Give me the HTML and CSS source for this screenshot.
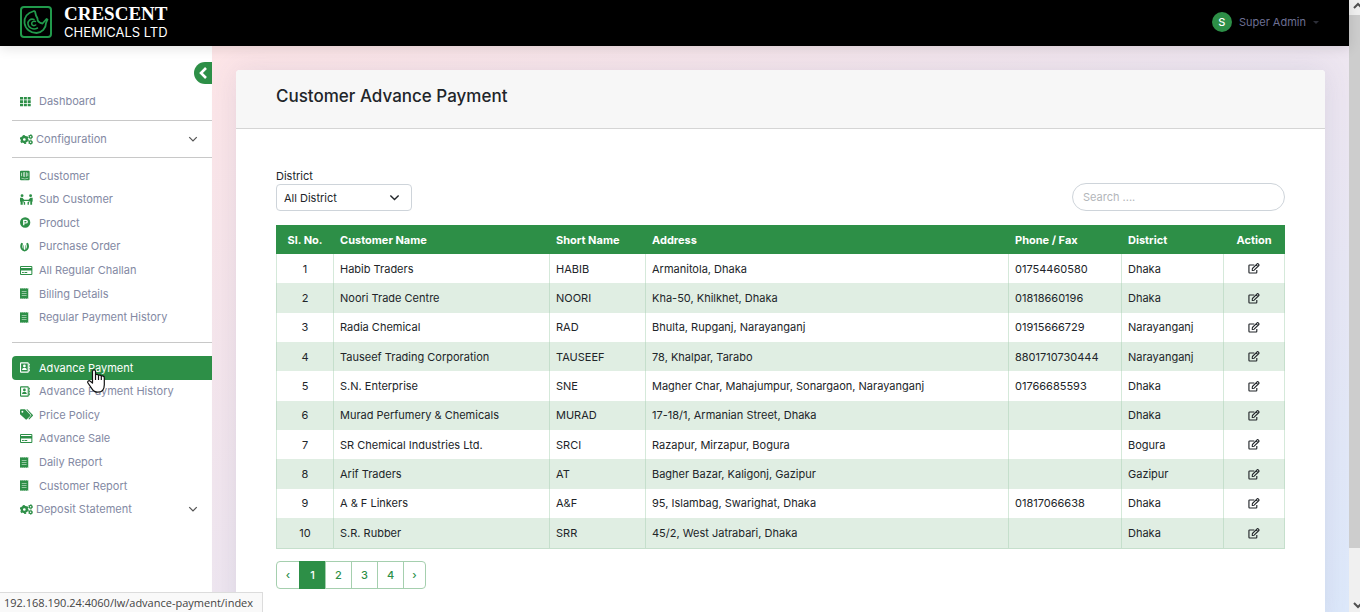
FILE: index.html
```html
<!DOCTYPE html>
<html lang="en">
<head>
<meta charset="utf-8">
<title>Customer Advance Payment</title>
<link rel="stylesheet" href="styles.css">
</head>
<body>
<svg class="sprite" aria-hidden="true">
  <symbol id="i-grid" viewBox="0 0 16 16" preserveAspectRatio="xMinYMid"><path d="M0 1.500h4.400v3.700H0zM5.600 1.500h4.400v3.700H5.600zM11.200 1.500h4.400v3.700h-4.400zM0 6.300h4.400V10H0zM5.600 6.300h4.400V10H5.600zM11.200 6.300h4.400V10h-4.400zM0 11.100h4.400v3.700H0zM5.600 11.100h4.400v3.700H5.600zM11.200 11.100h4.400v3.700h-4.400z"/></symbol>
  <symbol id="i-gears" viewBox="0 0 19 16" preserveAspectRatio="xMinYMid"><circle cx="6.300" cy="8" r="3.700" fill="none" stroke="currentColor" stroke-width="3.400"/><circle cx="6.300" cy="8" r="5.600" fill="none" stroke="currentColor" stroke-width="2" stroke-dasharray="2.900 2.960"/><circle cx="15.500" cy="4" r="2" fill="none" stroke="currentColor" stroke-width="1.800"/><circle cx="15.500" cy="4" r="3.200" fill="none" stroke="currentColor" stroke-width="1" stroke-dasharray="1.700 1.650"/><circle cx="15.500" cy="12" r="2" fill="none" stroke="currentColor" stroke-width="1.800"/><circle cx="15.500" cy="12" r="3.200" fill="none" stroke="currentColor" stroke-width="1" stroke-dasharray="1.700 1.650"/></symbol>
  <symbol id="i-intercom" viewBox="0 0 16 16" preserveAspectRatio="xMinYMid"><path fill-rule="evenodd" d="M1.500 1h11A1.500 1.500 0 0 1 14 2.500v11a1.500 1.500 0 0 1-1.500 1.500h-11A1.500 1.500 0 0 1 0 13.500v-11A1.500 1.500 0 0 1 1.500 1zM2 4v5h.9V4zm2.300-.8v6.500h.9V3.200zM6.500 3v7h.9V3zm2.200.2v6.500h.9V3.200zM11 4v5h.9V4zM2 11.200c3 2 7 2 10 0v.9c-3 2-7 2-10 0z"/></symbol>
  <symbol id="i-people" viewBox="0 0 19 16" preserveAspectRatio="xMinYMid"><circle cx="3" cy="2.400" r="2.100"/><circle cx="15.500" cy="2.400" r="2.100"/><path d="M0 5.500h3.500l2.500 2.700h6.500l2.500-2.700h3.500v5l-.8 1v4H15v-5l-1.500-.2h-8L4 10.500v5H.8v-4L0 10.500z"/><path d="M4 10l3.500 2v3.500h-2V13zM14.500 10L11 12v3.500h2V13z"/></symbol>
  <symbol id="i-product" viewBox="0 0 16 16" preserveAspectRatio="xMinYMid"><path fill-rule="evenodd" d="M7.500.5a7.500 7.500 0 1 1 0 15 7.500 7.500 0 0 1 0-15zM4.500 4v8h1.900V9.600h2.300a2.800 2.800 0 0 0 0-5.600zM6.400 5.700h2.100a1.100 1.100 0 0 1 0 2.200H6.400z"/></symbol>
  <symbol id="i-order" viewBox="0 0 16 16" preserveAspectRatio="xMinYMid"><path d="M1.900 2.500C-1 7-.2 13.500 6.700 15.300 13.600 13.500 14.400 7 11.500 2.500L9 3.500C10.500 7 10 10.500 8.600 12L8.300 6H7.600v6.700H5.800V6h-.7L4.800 12C3.400 10.500 2.900 7 4.400 3.500z"/></symbol>
  <symbol id="i-card" viewBox="0 0 18 16" preserveAspectRatio="xMinYMid"><path fill-rule="evenodd" d="M1.500 1.500h15A1.500 1.500 0 0 1 18 3v10a1.500 1.500 0 0 1-1.500 1.500h-15A1.500 1.500 0 0 1 0 13V3a1.500 1.500 0 0 1 1.500-1.500zM1.500 3v1.500h15V3zm0 5v5h15V8zM3 10h2.500v1.700H3zm3.500 0h4v1.700h-4z"/></symbol>
  <symbol id="i-receipt" viewBox="0 0 16 16" preserveAspectRatio="xMinYMid"><path fill-rule="evenodd" d="M0 0l1.500 1L3 0l1.500 1L6 0l1.500 1L9 0l1.500 1L12 0v16l-1.500-1L9 16l-1.500-1L6 16l-1.500-1L3 16l-1.500-1L0 16zM2.500 4.200v1h7v-1zm0 3.300v1h7v-1zm0 3.300v1h7v-1z"/></symbol>
  <symbol id="i-book" viewBox="0 0 16 16" preserveAspectRatio="xMinYMid"><path fill-rule="evenodd" d="M1.500.5h9.800A1.500 1.500 0 0 1 12.800 2v12a1.500 1.500 0 0 1-1.500 1.500H1.500A1.500 1.500 0 0 1 0 14V2A1.500 1.500 0 0 1 1.500.5zm.1 1.600v11.800h9.600V2.100zM13.300 2.500h1.200v2.700h-1.200zm0 4.100h1.200v2.700h-1.200zm0 4.100h1.200v2.700h-1.200z"/><circle cx="6.400" cy="5.700" r="2"/><path d="M3 11.800c0-4.500 6.800-4.500 6.800 0z"/></symbol>
  <symbol id="i-tags" viewBox="0 0 19 16" preserveAspectRatio="xMinYMid"><path fill-rule="evenodd" d="M0 2A1.500 1.500 0 0 1 1.500.5h5.800L15 8.200a1.400 1.400 0 0 1 0 2L10 15.100a1.400 1.400 0 0 1-2 0L0 7.500zM3.500 2.600a1.400 1.400 0 1 0 0 2.800 1.400 1.400 0 0 0 0-2.800z"/><path d="M9.200.5h1.500l7.800 7.700a1.400 1.400 0 0 1 0 2L13.500 15.300l-1.300-.8 4.500-5.300z"/></symbol>
  <symbol id="i-edit" viewBox="0 0 18 16"><path fill="none" stroke="currentColor" stroke-width="1.700" d="M9.500 2.700H2.400a1 1 0 0 0-1 1v10a1 1 0 0 0 1 1h9.800a1 1 0 0 0 1-1v-3.500"/><path fill="none" stroke="currentColor" stroke-width="1.600" stroke-linejoin="round" d="M6.300 10.900l.3-2.900L13.700.9q.8-.6 1.500 0l1.100 1.200q.6.700 0 1.400l-7.100 7.100zM12.200 2.500l2.600 2.600"/></symbol>
  <symbol id="i-down" viewBox="0 0 16 16"><path d="M2 5l6 6 6-6" fill="none" stroke="currentColor"/></symbol>
</svg>

<div class="window">
  <div class="app">
    <header class="topbar">
      <a class="brand" href="#">
        <svg class="brand-mark" viewBox="0 0 32 32" aria-hidden="true"><rect x="1" y="1" width="30" height="30" rx="3" stroke-width="2"/><path stroke-width="1.800" stroke-linejoin="round" d="M14 5C7 7 4 11.500 4.500 17c.7 6 6 10 12 10 5.500-.2 9.500-4.500 9.500-10l1.500-3.500-1-.5-4 4.500c-3-.5-5.300-2.500-5-5l-1.500-3L15 5.500z"/><path stroke-width="1.500" stroke-linecap="round" d="M14 13.500c-3.500-1.300-6.500 1.200-6 4.700.6 4 5.500 6 9.500 3.800M15.500 15.500c-2-.8-4 .4-3.800 2.300.2 1.800 2.500 2.400 4 1.200"/></svg>
        <span class="brand-text"><span class="brand-name">CRESCENT</span><span class="brand-sub">CHEMICALS LTD</span></span>
      </a>
      <button class="account" type="button"><span class="avatar">S</span><span>Super Admin</span><span class="caret"></span></button>
    </header>
    <div class="body">
      <nav class="sidebar">
        <button class="collapse" type="button" aria-label="Collapse menu"><svg viewBox="0 0 10 14" aria-hidden="true"><path d="M8 2L3 7l5 5" fill="none" stroke="#fff" stroke-width="2.600"/></svg></button>
        <a class="item solo" href="#"><svg><use href="#i-grid"/></svg>Dashboard</a>
        <hr>
        <a class="item parent tall" href="#"><svg><use href="#i-gears"/></svg>Configuration<svg class="chev"><use href="#i-down"/></svg></a>
        <hr>
        <div class="group">
          <a class="item" href="#"><svg><use href="#i-intercom"/></svg>Customer</a>
          <a class="item" href="#"><svg><use href="#i-people"/></svg>Sub Customer</a>
          <a class="item" href="#"><svg><use href="#i-product"/></svg>Product</a>
          <a class="item" href="#"><svg><use href="#i-order"/></svg>Purchase Order</a>
          <a class="item" href="#"><svg><use href="#i-card"/></svg>All Regular Challan</a>
          <a class="item" href="#"><svg><use href="#i-receipt"/></svg>Billing Details</a>
          <a class="item" href="#"><svg><use href="#i-receipt"/></svg>Regular Payment History</a>
        </div>
        <hr>
        <div class="group second">
          <a class="item active" href="#"><svg><use href="#i-book"/></svg>Advance Payment</a>
          <a class="item" href="#"><svg><use href="#i-book"/></svg>Advance Payment History</a>
          <a class="item" href="#"><svg><use href="#i-tags"/></svg>Price Policy</a>
          <a class="item" href="#"><svg><use href="#i-card"/></svg>Advance Sale</a>
          <a class="item" href="#"><svg><use href="#i-receipt"/></svg>Daily Report</a>
          <a class="item" href="#"><svg><use href="#i-receipt"/></svg>Customer Report</a>
          <a class="item parent" href="#"><svg><use href="#i-gears"/></svg>Deposit Statement<svg class="chev"><use href="#i-down"/></svg></a>
        </div>
      </nav>
      <main class="main">
        <section class="card">
          <div class="card-head"><h1>Customer Advance Payment</h1></div>
          <div class="card-body">
            <div class="filters">
              <div class="field">
                <label for="district">District</label>
                <div class="select-wrap">
                  <select id="district"><option>All District</option></select>
                  <svg aria-hidden="true"><use href="#i-down"/></svg>
                </div>
              </div>
              <input class="search" type="search" placeholder="Search ...." aria-label="Search">
            </div>
            <table>
              <colgroup><col class="c-no"><col class="c-name"><col class="c-short"><col><col class="c-phone"><col class="c-dist"><col class="c-act"></colgroup>
              <thead><tr><th class="mid">Sl. No.</th><th>Customer Name</th><th>Short Name</th><th>Address</th><th>Phone / Fax</th><th>District</th><th class="mid">Action</th></tr></thead>
              <tbody>
                <tr><td class="mid">1</td><td>Habib Traders</td><td>HABIB</td><td>Armanitola, Dhaka</td><td>01754460580</td><td>Dhaka</td><td class="mid"><a href="#" aria-label="Edit"><svg><use href="#i-edit"/></svg></a></td></tr>
                <tr><td class="mid">2</td><td>Noori Trade Centre</td><td>NOORI</td><td>Kha-50, Khilkhet, Dhaka</td><td>01818660196</td><td>Dhaka</td><td class="mid"><a href="#" aria-label="Edit"><svg><use href="#i-edit"/></svg></a></td></tr>
                <tr><td class="mid">3</td><td>Radia Chemical</td><td>RAD</td><td>Bhulta, Rupganj, Narayanganj</td><td>01915666729</td><td>Narayanganj</td><td class="mid"><a href="#" aria-label="Edit"><svg><use href="#i-edit"/></svg></a></td></tr>
                <tr><td class="mid">4</td><td>Tauseef Trading Corporation</td><td>TAUSEEF</td><td>78, Khalpar, Tarabo</td><td>8801710730444</td><td>Narayanganj</td><td class="mid"><a href="#" aria-label="Edit"><svg><use href="#i-edit"/></svg></a></td></tr>
                <tr><td class="mid">5</td><td>S.N. Enterprise</td><td>SNE</td><td>Magher Char, Mahajumpur, Sonargaon, Narayanganj</td><td>01766685593</td><td>Dhaka</td><td class="mid"><a href="#" aria-label="Edit"><svg><use href="#i-edit"/></svg></a></td></tr>
                <tr><td class="mid">6</td><td>Murad Perfumery &amp; Chemicals</td><td>MURAD</td><td>17-18/1, Armanian Street, Dhaka</td><td></td><td>Dhaka</td><td class="mid"><a href="#" aria-label="Edit"><svg><use href="#i-edit"/></svg></a></td></tr>
                <tr><td class="mid">7</td><td>SR Chemical Industries Ltd.</td><td>SRCI</td><td>Razapur, Mirzapur, Bogura</td><td></td><td>Bogura</td><td class="mid"><a href="#" aria-label="Edit"><svg><use href="#i-edit"/></svg></a></td></tr>
                <tr><td class="mid">8</td><td>Arif Traders</td><td>AT</td><td>Bagher Bazar, Kaligonj, Gazipur</td><td></td><td>Gazipur</td><td class="mid"><a href="#" aria-label="Edit"><svg><use href="#i-edit"/></svg></a></td></tr>
                <tr><td class="mid">9</td><td>A &amp; F Linkers</td><td>A&amp;F</td><td>95, Islambag, Swarighat, Dhaka</td><td>01817066638</td><td>Dhaka</td><td class="mid"><a href="#" aria-label="Edit"><svg><use href="#i-edit"/></svg></a></td></tr>
                <tr><td class="mid">10</td><td>S.R. Rubber</td><td>SRR</td><td>45/2, West Jatrabari, Dhaka</td><td></td><td>Dhaka</td><td class="mid"><a href="#" aria-label="Edit"><svg><use href="#i-edit"/></svg></a></td></tr>
              </tbody>
            </table>
            <div class="pager">
              <a class="step" href="#">‹</a><a class="current" href="#">1</a><a href="#">2</a><a href="#">3</a><a href="#">4</a><a class="step" href="#">›</a>
            </div>
          </div>
        </section>
      </main>
    </div>
  </div>
  <div class="scrollbar" aria-hidden="true">
    <svg viewBox="0 0 11 15"><path d="M5 8l4-4 4 4" fill="none" stroke="#505050" stroke-width="2"/></svg>
    <div class="thumb"></div>
    <svg viewBox="0 0 11 15"><path d="M5 6l4 4 4-4" fill="none" stroke="#505050" stroke-width="2"/></svg>
  </div>
</div>
<div class="status">192.168.190.24:4060/lw/advance-payment/index</div>
<svg class="pointer" viewBox="0 0 18 24" aria-hidden="true"><path fill="#fff" stroke="#111" stroke-width="1.200" stroke-linejoin="round" d="M5.500 14V2.500C5.500.4 8.500.4 8.500 2.500V6c.8-1 2.600-.8 3 .5.800-.8 2.400-.4 2.800.8 1.200-.8 3-.1 3 1.500v7c0 4-2 7.400-6.500 7.400-3 0-4.500-1.200-6-3.600L1 14c-1-1.800 1-3 2.300-1.800zM8.500 6v5M11.500 6.500v4.500M14.300 7.500V11"/></svg>
</body>
</html>
```
FILE: styles.css
```css
* { box-sizing: border-box; }
body {
  margin: 0;
  height: 100vh;
  overflow: hidden;
  font: 11px/16px Inter, "Liberation Sans", sans-serif;
  color: #212529;
}
a { color: inherit; text-decoration: none; }
button, input, select { font: inherit; color: inherit; }
svg { fill: currentColor; }
.sprite { display: none; }

.window { display: flex; height: 100%; }
.app { flex: 1; display: flex; flex-direction: column; min-width: 0; }

.topbar {
  position: relative;
  display: flex;
  justify-content: space-between;
  align-items: center;
  flex: none;
  height: 46px;
  padding: 0 30px 2px 20px;
  background: #000;
  box-shadow: 0 2px 12px rgba(0, 0, 0, .12);
}
.brand { display: flex; align-items: center; gap: 12px; color: #fff; }
.brand-mark { width: 32px; height: 32px; fill: none; stroke: #219a4b; }
.brand-text { display: flex; flex-direction: column; }
.brand-name { font: bold 19px/20px "Liberation Serif", serif; }
.brand-sub { font-size: 13px; line-height: 16px; }
.account {
  display: flex;
  align-items: center;
  gap: 7px;
  padding: 0;
  border: 0;
  background: none;
  color: #6c6f93;
}
.avatar {
  width: 20px;
  height: 20px;
  border-radius: 50%;
  background: #2d8f47;
  color: #fff;
  font-weight: 500;
  line-height: 20px;
}
.caret { border: 3px solid transparent; border-top-color: #2c2e38; border-bottom: 0; }

.body { flex: 1; display: flex; min-height: 0; }
.sidebar {
  flex: none;
  width: 212px;
  padding: 16px 0 0 12px;
  display: flex;
  flex-direction: column;
  background: #fff;
}
.collapse {
  align-self: flex-end;
  flex: none;
  width: 18px;
  height: 22px;
  padding: 0;
  border: 0;
  border-radius: 11px 0 0 11px;
  background: #2d8f47;
  display: flex;
  align-items: center;
  justify-content: center;
}
.collapse svg { width: 10px; height: 14px; }
.sidebar hr { flex: none; width: 100%; height: 1px; margin: 0; border: 0; background: #c8c8c8; }
.item {
  display: flex;
  align-items: center;
  gap: 6px;
  padding: 0 14px 0 8px;
  color: #8389a3;
}
.item svg { flex: none; width: 13px; height: 11px; color: #2d8f47; }
.solo { height: 24px; margin: 5px 0 7px; }
.tall { height: 36px; }
.parent { gap: 3px; }
.item .chev { width: 10px; height: 10px; margin-left: auto; color: #555; stroke-width: 2; }
.group { display: grid; grid-auto-rows: 1fr; min-height: 165px; margin: 6px 0 13px; }
.second { margin-top: 13px; }
.item.active { background: #2d8f47; color: #fff; border-radius: 4px 0 0 4px; }
.item.active svg { color: #fff; }

.main {
  flex: 1;
  min-width: 0;
  padding: 24px 24px 0;
  background: linear-gradient(to bottom right, #fde5e7, #ece6f1 55%, #dde9fb);
}
.card {
  min-height: 100%;
  border-radius: 4px 4px 0 0;
  background: #fff;
  box-shadow: 0 0 28px rgba(80, 80, 130, .12);
}
.card-head { padding: 14px 40px 20px; border-bottom: 1px solid #d5d5d5; border-radius: 4px 4px 0 0; background: #f7f7f7; }
h1 { margin: 0; font-size: 17px; line-height: 24px; font-weight: 500; }
.card-body { padding: 39px 40px 40px; }
.filters { display: flex; justify-content: space-between; align-items: flex-end; margin-bottom: 14px; }
.field { display: flex; flex-direction: column; }
.select-wrap { position: relative; width: 136px; }
.select-wrap select {
  display: block;
  appearance: none;
  width: 100%;
  height: 27px;
  padding: 0 28px 0 7px;
  border: 1px solid #ced4da;
  border-radius: 4px;
  background: #fff;
}
.select-wrap svg { position: absolute; right: 12px; top: 8px; width: 11px; height: 11px; stroke-width: 2; pointer-events: none; }
.search {
  width: 213px;
  height: 28px;
  padding: 0 10px;
  border: 1px solid #ced4da;
  border-radius: 14px;
  background: #fff;
}
.search::placeholder { color: #b3b6ba; }

table { width: 100%; border-collapse: collapse; table-layout: fixed; height: 324px; }
thead tr { height: 29px; }
.c-no { width: 57px; }
.c-name { width: 216px; }
.c-short { width: 96px; }
.c-phone { width: 113px; }
.c-dist { width: 102px; }
.c-act { width: 61px; }
th, td { padding: 0 6px; text-align: left; border: 1px solid #d5e9da; border-width: 0 1px; }
th { background: #2d8f47; color: #fff; font-weight: 700; border-color: #2d8f47; }
tbody tr:nth-child(even) { background: #e0eee3; }
tbody tr:nth-child(even) td { border-color: #c5dfcc; }
tbody tr:last-child td { border-bottom: 1px solid #c5dfcc; }
.mid { text-align: center; }
td a { display: flex; justify-content: center; }
td svg { width: 12px; height: 11px; }

.pager { display: inline-flex; margin-top: 12px; border: 1px solid #a5cfae; border-radius: 4px; color: #2d8f47; font-weight: 500; }
.pager a { min-width: 26px; padding: 5px 8px; border-left: 1px solid #a5cfae; text-align: center; }
.pager a:first-child { border-left: 0; }
.pager .step { min-width: 22px; }
.pager .current { margin: -1px 0; padding: 6px 8px; background: #2d8f47; color: #fff; border-color: #2d8f47; }

.scrollbar { flex: none; width: 11px; display: flex; flex-direction: column; background: #f0f0f0; }
.scrollbar svg { flex: none; width: 11px; height: 15px; }
.thumb { flex: 1; margin-bottom: 49px; background: #cdcdcd; }

.status {
  position: fixed;
  left: 0;
  bottom: 0;
  padding: 2px 9px 1px 4px;
  border: 1px solid #dcdcdc;
  border-width: 1px 1px 0 0;
  background: #f9f9f9;
  font: 11px/16px "Open Sans", sans-serif;
  color: #444;
}
.pointer { position: fixed; left: 87px; top: 369px; width: 18px; height: 24px; }
```
